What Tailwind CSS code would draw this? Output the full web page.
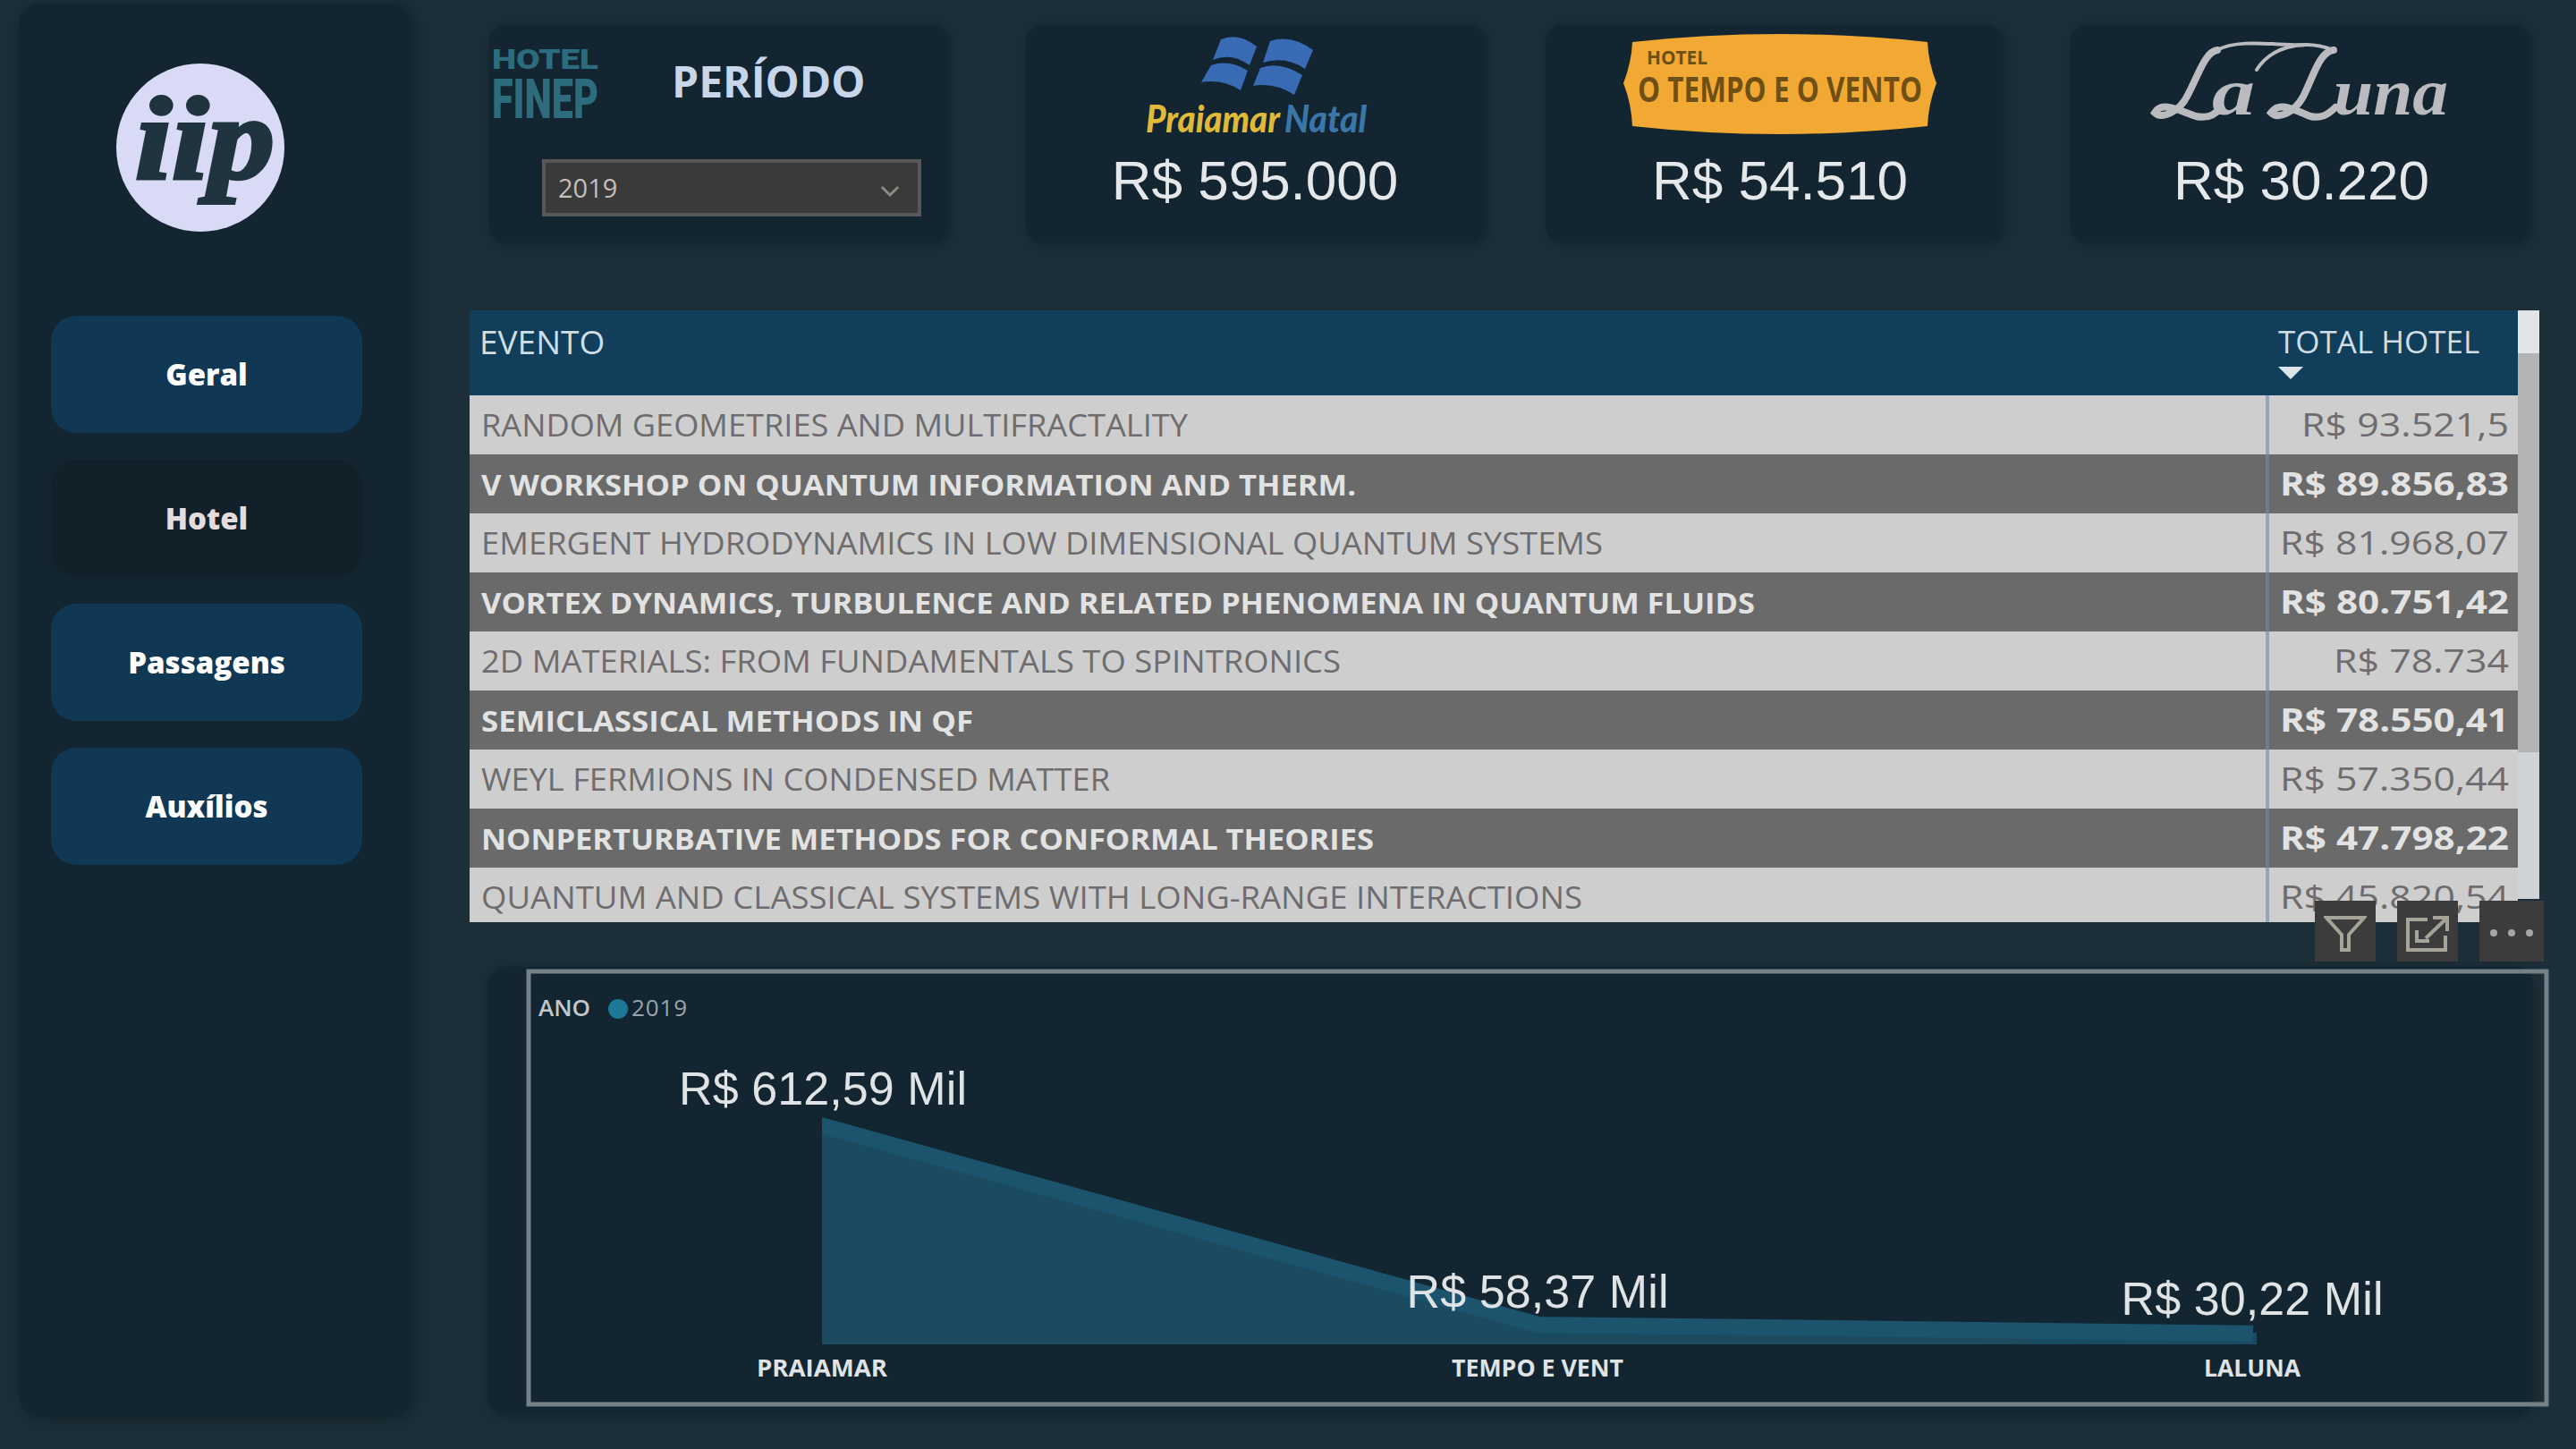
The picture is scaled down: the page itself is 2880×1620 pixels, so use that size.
<!DOCTYPE html>
<html lang="pt-BR">
<head>
<meta charset="utf-8">
<title>Hotel</title>
<script src="https://cdn.jsdelivr.net/npm/@tailwindcss/browser@4"></script>
</head>
<body class="bg-[#1c2e38] font-['Open_Sans',sans-serif] text-[#e4e8ea]">
<div class="flex h-[1620px] w-[2880px] overflow-hidden">

  <!-- Sidebar -->
  <aside class="ml-[21px] mt-1 flex h-[1580px] w-[438px] flex-col items-center rounded-[24px] bg-[#122530] pl-[2px] shadow-[4px_2px_14px_#12232a]">
    <svg class="mt-[66px] -ml-[34px] h-[190px] w-[190px]" viewBox="0 0 190 190">
      <circle cx="95" cy="95" r="94" fill="#d9daf6"/>
      <text x="22" y="129" font-family="Liberation Serif" font-weight="bold" font-style="italic" font-size="132" textLength="156" lengthAdjust="spacingAndGlyphs" fill="#20343f" stroke="#20343f" stroke-width="4">iip</text>
    </svg>
    <nav class="mt-[93px] flex w-[348px] -ml-[20px] flex-col gap-[30px] text-center text-[33px] font-extrabold text-white">
      <a class="flex h-[131px] items-center justify-center rounded-[28px] bg-[#103754]">Geral</a>
      <a class="flex h-[131px] items-center justify-center rounded-[28px] bg-[#112029] text-[#e3dcdf]">Hotel</a>
      <a class="flex h-[131px] items-center justify-center rounded-[28px] bg-[#103754]">Passagens</a>
      <a class="flex h-[131px] items-center justify-center rounded-[28px] bg-[#103754]">Auxílios</a>
    </nav>
  </aside>

  <main class="ml-[66px] flex w-[2330px] flex-col">
    <!-- Cards -->
    <section class="ml-[22px] mt-[28px] flex h-[243px]">
      <div class="w-[512px] rounded-[18px] bg-[#122530] shadow-[3px_2px_12px_#12232a]">
        <div class="flex h-[150px]">
          <svg class="mt-[22px] h-[88px] w-[126px]" viewBox="0 0 126 88" fill="#2d6c7d" font-family="Roboto" font-weight="900">
            <text x="3" y="27" font-size="32" textLength="119" lengthAdjust="spacingAndGlyphs">HOTEL</text>
            <text x="3" y="82" font-size="62" textLength="119" lengthAdjust="spacingAndGlyphs">FINEP</text>
          </svg>
          <span class="ml-[78px] mt-[28px] text-[48px] leading-[70px] font-bold text-[#c8d6ea]">PERÍODO</span>
        </div>
        <div class="ml-[59px] flex h-[64px] w-[424px] items-center justify-between border-4 border-[#58585a] bg-[#3a3a3a] pl-[14px] pr-[20px] text-[29px] text-[#c4bfba]">
          <span>2019</span>
          <svg class="mt-[6px] h-[13px] w-[22px]" viewBox="0 0 24 14" fill="none" stroke="#8f8c84" stroke-width="3"><path d="M2 2l10 10L22 2"/></svg>
        </div>
      </div>

      <div class="ml-[88px] flex w-[512px] flex-col items-center rounded-[18px] bg-[#122530] shadow-[3px_2px_12px_#12232a]">
        <svg class="mt-[10px] ml-[14px] h-[124px] w-[270px]" viewBox="0 0 270 124">
          <g fill="#386bb4">
            <path d="M90 6Q110 -2 130 14L122 35Q102 20 81 29Z"/>
            <path d="M145 8Q168 0 193 18L184 39Q162 24 137 32Z"/>
            <path d="M79 35Q99 28 120 41L112 63Q92 50 68 54Z"/>
            <path d="M134 38Q156 30 181 46L172 68Q150 54 126 58Z"/>
          </g>
          <g font-family="Lato" font-weight="900" font-style="italic" font-size="42">
            <text x="6" y="110" fill="#dfb93a" textLength="150" lengthAdjust="spacingAndGlyphs">Praiamar</text>
            <text x="161" y="110" fill="#3a76a8" textLength="92" lengthAdjust="spacingAndGlyphs">Natal</text>
          </g>
        </svg>
        <span class="font-['Liberation_Sans',sans-serif] text-[62px] leading-[80px]">R$ 595.000</span>
      </div>

      <div class="ml-[69px] flex w-[510px] flex-col items-center rounded-[18px] bg-[#122530] pl-[14px] shadow-[3px_2px_12px_#12232a]">
        <svg class="mt-[8px] h-[116px] w-[354px]" viewBox="0 0 354 116">
          <path d="M12 11Q176 -7 342 11Q343 34 352 57Q343 80 342 105Q176 123 12 105Q11 80 2 57Q11 34 12 11Z" fill="#f2a934"/>
          <g fill="#6f4f14" font-family="Open Sans" font-weight="bold">
            <text x="28" y="36" font-size="22" textLength="68" lengthAdjust="spacingAndGlyphs">HOTEL</text>
            <text x="18" y="78" font-size="40" textLength="318" lengthAdjust="spacingAndGlyphs">O TEMPO E O VENTO</text>
          </g>
        </svg>
        <span class="mt-[10px] font-['Liberation_Sans',sans-serif] text-[62px] leading-[80px]">R$ 54.510</span>
      </div>

      <div class="ml-[77px] flex w-[512px] flex-col items-center rounded-[18px] bg-[#122530] pl-[4px] shadow-[3px_2px_12px_#12232a]">
        <svg class="mt-[8px] h-[116px] w-[340px]" viewBox="0 0 340 116" fill="none" stroke="#b9bbbf" stroke-width="8" stroke-linecap="round">
          <path d="M76 20C62 22 55 48 42 72C34 88 14 98 6 90C14 76 34 88 52 94C66 97 74 92 80 84"/>
          <path d="M76 20C100 6 150 16 174 14" stroke-width="4"/>
          <path d="M206 20C190 22 184 48 172 72C162 90 144 98 136 90C146 76 164 88 180 94C192 97 200 92 208 84"/>
          <path d="M206 20C170 6 135 18 120 42" stroke-width="4"/>
          <g fill="#b9bbbf" stroke="none" font-family="Liberation Serif" font-style="italic" font-weight="bold">
            <text x="70" y="92" font-size="74" textLength="48" lengthAdjust="spacingAndGlyphs">a</text>
            <text x="206" y="92" font-size="74" textLength="128" lengthAdjust="spacingAndGlyphs">una</text>
          </g>
        </svg>
        <span class="mt-[10px] font-['Liberation_Sans',sans-serif] text-[62px] leading-[80px]">R$ 30.220</span>
      </div>
    </section>

    <!-- Table -->
    <section class="mt-[76px] flex h-[684px]">
      <div class="h-[684px] w-[2290px] overflow-hidden text-[34px] whitespace-nowrap">
        <div class="flex h-[95px] bg-[#113e5b] text-[37px] text-[#cfdde4]">
          <div class="w-[2010px] pl-[11px] pt-[10px] leading-[50px]">EVENTO</div>
          <div class="flex-1 pl-[12px] pt-[10px] text-[35px] leading-[50px]">TOTAL HOTEL
            <svg class="mt-[3px] h-[14px] w-[28px]" viewBox="0 0 28 14" fill="#dbe5ea"><path d="M0 0h28L14 14Z"/></svg>
          </div>
        </div>
        <div id="rows"></div>
      </div>
      <div class="flex h-[658px] w-[24px] flex-col bg-[#cfd3d5]">
        <div class="h-[48px] bg-[#e1e5e7]"></div>
        <div class="h-[446px] bg-[#b1b3b4]"></div>
      </div>
    </section>

    <!-- Chart -->
    <section class="relative ml-[22px] mt-[50px] h-[500px] w-[2284px] rounded-[18px] bg-[#122530] shadow-[0_2px_12px_#12232a]">
      <div class="absolute left-[2041px] top-[-74px] flex gap-[24px]">
        <div class="flex h-[68px] w-[68px] items-center justify-center bg-[#3c3c3c]"><svg class="mt-[6px] h-[44px] w-[48px]" viewBox="0 0 48 44" fill="none" stroke="#a6a499" stroke-width="4"><path d="M3 4h42L28 23v17h-8V23Z"/></svg></div>
        <div class="flex h-[68px] w-[68px] items-center justify-center bg-[#3c3c3c]"><svg class="mt-[6px] h-[44px] w-[52px]" viewBox="0 0 52 44" fill="none" stroke="#a6a499" stroke-width="4"><path d="M26 6H4v34h42V24M32 4h16v15M47 5L24 27M14 18v12h14"/></svg></div>
        <div class="flex h-[68px] w-[72px] items-center justify-center bg-[#3c3c3c]"><svg class="mt-[4px] h-[10px] w-[52px]" viewBox="0 0 52 10" fill="#a6a6a6"><circle cx="6" cy="5" r="4"/><circle cx="26" cy="5" r="4"/><circle cx="46" cy="5" r="4"/></svg></div>
      </div>
      <svg class="absolute left-[41px] top-[2px] h-[490px] w-[2262px]" viewBox="588 1083 2262 490">
        <rect x="591" y="1086" width="2256" height="484" fill="none" stroke="#748187" stroke-width="5"/>
        <path d="M919 1258L1720 1479L2523 1490V1503H919Z" fill="#1b4b60"/>
        <clipPath id="c"><path d="M919 1200H2535L2518 1505H919Z"/></clipPath>
        <path d="M900 1253L1720 1481L2540 1491" fill="none" stroke="#1c546e" stroke-width="18" clip-path="url(#c)"/>
        <g font-family="Open Sans" fill="#c2c8ca" font-size="26">
          <text x="602" y="1136" font-weight="600" textLength="58">ANO</text>
          <circle cx="691" cy="1128" r="11" fill="#1c7896"/>
          <text x="706" y="1136" textLength="62" fill="#9aa5aa">2019</text>
        </g>
        <g font-family="Liberation Sans" fill="#dfe3e5" font-size="52" text-anchor="middle">
          <text x="920" y="1235" textLength="322">R$ 612,59 Mil</text>
          <text x="1719" y="1462" textLength="293">R$ 58,37 Mil</text>
          <text x="2518" y="1470" textLength="293">R$ 30,22 Mil</text>
        </g>
        <g font-family="Open Sans" font-weight="bold" fill="#dfe3e5" font-size="27" text-anchor="middle">
          <text x="919" y="1539" textLength="146" lengthAdjust="spacingAndGlyphs">PRAIAMAR</text>
          <text x="1719" y="1539" textLength="192" lengthAdjust="spacingAndGlyphs">TEMPO E VENT</text>
          <text x="2518" y="1539" textLength="108" lengthAdjust="spacingAndGlyphs">LALUNA</text>
        </g>
      </svg>
    </section>
  </main>
</div>
<script>
  // name, total, drawn width of the name
  const rows = [
    ["RANDOM GEOMETRIES AND MULTIFRACTALITY", "R$ 93.521,5", 790],
    ["V WORKSHOP ON QUANTUM INFORMATION AND THERM.", "R$ 89.856,83", 978],
    ["EMERGENT HYDRODYNAMICS IN LOW DIMENSIONAL QUANTUM SYSTEMS", "R$ 81.968,07", 1254],
    ["VORTEX DYNAMICS, TURBULENCE AND RELATED PHENOMENA IN QUANTUM FLUIDS", "R$ 80.751,42", 1424],
    ["2D MATERIALS: FROM FUNDAMENTALS TO SPINTRONICS", "R$ 78.734", 961],
    ["SEMICLASSICAL METHODS IN QF", "R$ 78.550,41", 550],
    ["WEYL FERMIONS IN CONDENSED MATTER", "R$ 57.350,44", 703],
    ["NONPERTURBATIVE METHODS FOR CONFORMAL THEORIES", "R$ 47.798,22", 998],
    ["QUANTUM AND CLASSICAL SYSTEMS WITH LONG-RANGE INTERACTIONS", "R$ 45.820,54", 1231]
  ];
  document.getElementById("rows").innerHTML = rows.map(([name, total, w], i) => `
    <div class="flex h-[66px] ${i % 2 ? "bg-[#6a6a6a] font-bold text-[#e2e2e2]" : "bg-[#cecece] text-[#6e6c6e]"}">
      <div class="w-[2008px]"><svg class="h-[66px] w-[2000px]" viewBox="0 0 2000 66"><text x="13" y="46" font-size="${i % 2 ? 33 : 35}" fill="currentColor" textLength="${w}" lengthAdjust="spacingAndGlyphs">${name}</text></svg></div>
      <div class="w-[4px] bg-[#6f8ea6]/60"></div>
      <div class="flex-1"><svg class="h-[66px] w-[278px]" viewBox="0 0 278 66"><text x="268" y="46" text-anchor="end" font-size="${i % 2 ? 36 : 37}" fill="currentColor" textLength="${total.length === 12 ? 256 : total.length === 11 ? 232 : 196}" lengthAdjust="spacingAndGlyphs">${total}</text></svg></div>
    </div>`).join("");
</script>
</body>
</html>
